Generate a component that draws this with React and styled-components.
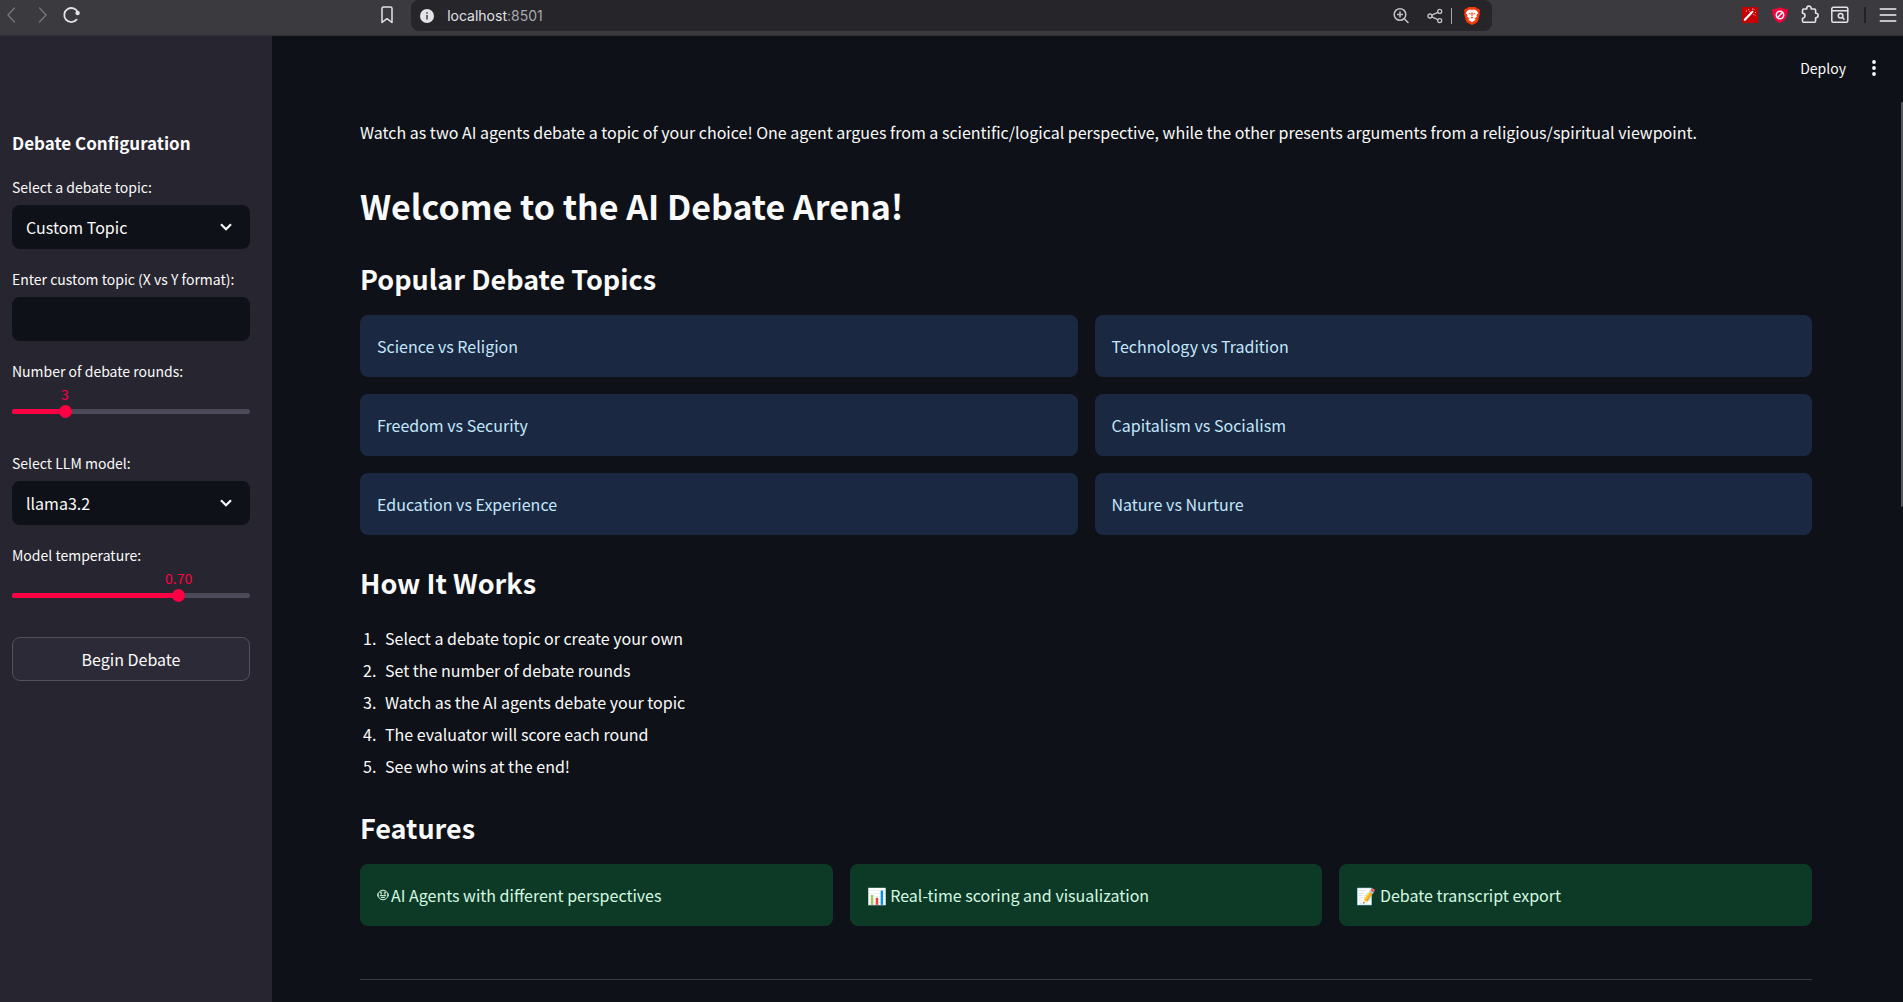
import React, { useState } from "react";
import styled, { createGlobalStyle, css } from "styled-components";

const Global = createGlobalStyle`
  *, *::before, *::after { box-sizing: border-box; }
  html, body, #root { height: 100%; }
  body {
    margin: 0;
    background: #0e1117;
    color: #fafafa;
    font: 400 16px/28px "Noto Sans CJK SC", "Noto Sans", sans-serif;
    overflow: hidden;
  }
  button, input, select { font: inherit; color: inherit; }
  h1, h2, h3, p, ol { margin: 0; }
`;

const Page = styled.div`
  height: 100%;
  display: flex;
  flex-direction: column;
`;

const Toolbar = styled.header`
  flex: none;
  display: flex;
  align-items: flex-start;
  height: 36px;
  background: #3b3a3f;
  border-bottom: 1px solid #2f2e35;
`;

const ToolGroup = styled.div`
  display: flex;
  align-items: center;
  height: 30px;
  gap: ${(p) => p.$gap}px;
  ${(p) => p.$grow && css`flex: 1;`}
  padding-left: ${(p) => p.$start || 0}px;
  padding-right: ${(p) => p.$end || 0}px;
  justify-content: ${(p) => p.$justify || "flex-start"};
`;

const IconButton = styled.button`
  flex: none;
  display: grid;
  place-items: center;
  width: 20px;
  height: 20px;
  padding: 0;
  border: 0;
  background: none;
  color: ${(p) => p.$color || "#e4e3e8"};
  svg { display: block; }
`;

const AddressBar = styled.form`
  flex: none;
  display: flex;
  align-items: center;
  gap: 10px;
  width: calc(57% - 4px);
  height: 31px;
  padding: 0 10px 0 6px;
  border-radius: 8px;
  background: #26252a;
`;

const Address = styled.div`
  flex: 1;
  font: 400 14px/30px Inter, sans-serif;
  color: #e2e1e6;
  span { color: #a9a8ae; }
`;

const Divider = styled.span`
  width: ${(p) => p.$w}px;
  height: 16px;
  background: ${(p) => p.$color};
`;

const Body = styled.div`
  flex: 1;
  min-height: 0;
  display: flex;
`;

const Sidebar = styled.aside`
  flex: none;
  display: flex;
  flex-direction: column;
  gap: 20px;
  width: 272px;
  padding: 93px 22px 0 12px;
  background: #27252f;
`;

const SidebarTitle = styled.h2`
  font-size: 17px;
  line-height: 28px;
  font-weight: 600;
`;

const Field = styled.div`
  display: flex;
  flex-direction: column;
  gap: ${(p) => p.$gap || 8}px;
  height: 72px;
`;

const Label = styled.label`
  font-size: 14px;
  line-height: 20px;
`;

const SelectWrap = styled.div`
  display: grid;
  align-items: center;
  > * { grid-area: 1 / 1; }
  svg {
    justify-self: end;
    margin-right: 18px;
    pointer-events: none;
  }
`;

const boxed = css`
  width: 100%;
  height: 44px;
  padding: 0 14px;
  border: 0;
  border-radius: 8px;
  background: #0e1117;
  outline: none;
`;

const Select = styled.select`
  ${boxed}
  appearance: none;
`;

const TextInput = styled.input`
  ${boxed}
`;

const SliderBox = styled.div`
  display: flex;
  flex-direction: column;
`;

const SliderValue = styled.output`
  align-self: flex-start;
  transform: translateX(-50%);
  font-size: 14px;
  line-height: 22px;
  color: #ff0044;
`;

const SliderLane = styled.div`
  display: grid;
  grid-template-columns: 100%;
  align-items: center;
  > * { grid-area: 1 / 1; }
`;

const Track = styled.div`
  height: 5px;
  border-radius: 3px;
  background: #4c4a58;
  overflow: hidden;
`;

const TrackFill = styled.div`
  height: 100%;
  background: #ff0044;
`;

const Range = styled.input`
  appearance: none;
  width: calc(100% + 12px);
  height: 13px;
  margin: 0 -6px;
  background: transparent;
  outline: none;
  &::-webkit-slider-runnable-track { height: 13px; }
  &::-webkit-slider-thumb {
    appearance: none;
    width: 13px;
    height: 13px;
    border-radius: 50%;
    background: #ff0044;
  }
`;

const PrimaryButton = styled.button`
  flex: none;
  height: 44px;
  border: 1px solid #53515e;
  border-radius: 8px;
  background: #2c2a36;
`;

const Main = styled.main`
  flex: 1;
  min-width: 0;
  display: flex;
  flex-direction: column;
`;

const AppHeader = styled.div`
  flex: none;
  display: flex;
  justify-content: flex-end;
  align-items: center;
  gap: 18px;
  height: 64px;
  padding-right: 19px;
`;

const DeployButton = styled.button`
  padding: 0;
  border: 0;
  background: none;
  font-size: 14px;
  line-height: 24px;
`;

const ScrollArea = styled.div`
  flex: 1;
  min-height: 0;
  display: flex;
`;

const Scroller = styled.div`
  flex: 1;
  min-width: 0;
  overflow-y: auto;
  scrollbar-width: none;
  padding: 18px 88px 18px;
`;

const ScrollRail = styled.div`
  flex: none;
  width: 3px;
  padding: 2px 0 0 1px;
`;

const ScrollThumb = styled.div`
  height: 45%;
  border-radius: 1px;
  background: #55565c;
`;

const Content = styled.div`
  display: flex;
  flex-direction: column;
`;

const Title = styled.h1`
  margin-top: 35px;
  font-size: 34px;
  line-height: 50px;
  font-weight: 600;
`;

const Heading = styled.h2`
  margin-top: 30px;
  margin-bottom: 18px;
  font-size: 27px;
  line-height: 36px;
  font-weight: 600;
`;

const CardGrid = styled.div`
  display: grid;
  grid-template-columns: repeat(${(p) => p.$cols}, 1fr);
  gap: 17px;
`;

const tones = {
  info: css`background: #1a2842; color: #c3e7fb;`,
  success: css`background: #0d3a27; color: #d5f9e0;`,
};

const Card = styled.div`
  display: flex;
  align-items: center;
  gap: 2px;
  min-height: 62px;
  padding: 0 17px;
  border-radius: 8px;
  ${(p) => tones[p.$tone]}
`;

const Steps = styled.ol`
  display: grid;
  gap: 4px;
  margin-top: 5px;
  padding-left: 20px;
  li { padding-left: 5px; }
`;

const Rule = styled.hr`
  width: 100%;
  height: 1px;
  margin: 53px 0 0;
  border: 0;
  background: #3a3b41;
`;

const Stroke = ({ w = 20, h = 20, sw = 1.4, children }) => (
  <svg width={w} height={h} viewBox={`0 0 ${w} ${h}`} fill="none" stroke="currentColor" strokeWidth={sw} strokeLinecap="round" strokeLinejoin="round" aria-hidden="true">
    {children}
  </svg>
);

const Chevron = () => (
  <svg width="12" height="8" viewBox="0 0 12 8" fill="none" stroke="currentColor" strokeWidth="2.2" aria-hidden="true">
    <path d="M1 1.2l5 5 5-5" />
  </svg>
);

const WandIcon = () => (
  <svg width="16" height="16" viewBox="0 0 16 16" aria-hidden="true">
    <rect width="16" height="16" fill="#c80000" />
    <path d="M2.8 12.8L9 6.2" stroke="#fff" strokeWidth="2.2" strokeLinecap="round" />
    <path d="M9.6 5.6l1-1" stroke="#fff" strokeWidth="1.8" strokeLinecap="round" />
    <path d="M4 4h1M6 2.6h1M7.2 4.4h1M11.5 2.4h1M13 5.5h1M11.4 7.5h1M10 2h1M12.8 8.4h.6" stroke="#ffb4b4" strokeWidth="1" />
  </svg>
);

const ShieldIcon = () => (
  <svg width="16" height="16" viewBox="0 0 16 16" aria-hidden="true">
    <path d="M8 0c2 1.4 4.5 2 7.6 2.1C15.8 8.5 14 13.5 8 16 2 13.5.2 8.5.4 2.1 3.5 2 6 1.4 8 0z" fill="#f8003c" />
    <circle cx="8" cy="8" r="3.7" fill="none" stroke="#fff" strokeWidth="1.5" />
    <path d="M5.6 10.4l4.8-4.8" stroke="#fff" strokeWidth="1.4" />
  </svg>
);

const BraveIcon = () => (
  <svg width="16" height="18" viewBox="0 0 16 18" aria-hidden="true">
    <path d="M4.6 0h6.8l1.8 1.7 1.5-.2L16 3.8l-.6 1.5.5 1.5-1.8 6.8c-.3 1-.8 1.6-1.6 2.2L8 18l-4.5-2.2c-.8-.6-1.3-1.2-1.6-2.2L.1 6.8l.5-1.5L0 3.8l1.3-2.3 1.5.2z" fill="#fb3a0c" />
    <path d="M8 3l2-.4 2.5.9 1.6 2.4-1.6 2.3.3 1.6-2.2 1.8 1 1.2L8 15.2l-3.6-2.4 1-1.2-2.2-1.8.3-1.6L1.9 5.9l1.6-2.4L6 2.6z" fill="#fff" />
    <path d="M4.2 5.8l2.6.7-.5 1.2zM11.8 5.8l-2.6.7.5 1.2zM7.3 5.5h1.4L8.5 9h-1zM6.4 10.6L8 9.7l1.6.9L8 11.4z" fill="#fb3a0c" />
  </svg>
);

const RobotFace = () => (
  <svg width="12" height="12" viewBox="0 0 12 12" fill="none" stroke="currentColor" aria-hidden="true">
    <ellipse cx="6" cy="6" rx="4.9" ry="4.8" strokeWidth="1" />
    <path d="M.4 4.4v3M11.6 4.4v3" strokeWidth=".8" />
    <path d="M2.8 3.2h2.400M6.800 3.200h2.400" strokeWidth="1" />
    <path d="M3.4 4.8h1.7M6.9 4.8h1.7" strokeWidth="1.3" />
    <path d="M2.8 6.7h6.4" strokeWidth="1.1" />
    <path d="M4 8.6h4" strokeWidth="1" />
  </svg>
);

const topics = [
  "Science vs Religion", "Technology vs Tradition",
  "Freedom vs Security", "Capitalism vs Socialism",
  "Education vs Experience", "Nature vs Nurture",
];

const steps = [
  "Select a debate topic or create your own",
  "Set the number of debate rounds",
  "Watch as the AI agents debate your topic",
  "The evaluator will score each round",
  "See who wins at the end!",
];

function SliderField({ id, label, min, max, step, initial, digits = 0 }) {
  const [value, setValue] = useState(initial);
  const at = `${((value - min) / (max - min)) * 100}%`;
  return (
    <Field $gap={2}>
      <Label htmlFor={id}>{label}</Label>
      <SliderBox>
        <SliderValue htmlFor={id} style={{ marginLeft: at }}>{value.toFixed(digits)}</SliderValue>
        <SliderLane>
          <Track><TrackFill style={{ width: at }} /></Track>
          <Range id={id} type="range" min={min} max={max} step={step} value={value}
            onChange={(e) => setValue(Number(e.target.value))} />
        </SliderLane>
      </SliderBox>
    </Field>
  );
}

function SelectField({ id, label, options }) {
  return (
    <Field>
      <Label htmlFor={id}>{label}</Label>
      <SelectWrap>
        <Select id={id}>{options.map((o) => <option key={o}>{o}</option>)}</Select>
        <Chevron />
      </SelectWrap>
    </Field>
  );
}

function BrowserBar() {
  return (
    <Toolbar>
      <ToolGroup $grow $start={2} $end={14} $justify="space-between">
        <ToolGroup $gap={10}>
          <IconButton aria-label="Back" $color="#76757b"><Stroke><path d="M12.5 3L6 10l6.5 7" /></Stroke></IconButton>
          <IconButton aria-label="Forward" $color="#76757b"><Stroke><path d="M7.5 3L14 10l-6.5 7" /></Stroke></IconButton>
          <IconButton aria-label="Reload">
            <Stroke sw={1.8}><path d="M14.6 14.6A7 7 0 1 1 15.8 7.5" /><circle cx="15.6" cy="8" r="1.3" fill="currentColor" /></Stroke>
          </IconButton>
        </ToolGroup>
        <IconButton aria-label="Bookmark"><Stroke sw={1.5}><path d="M5 3.5q0-1.5 1.5-1.5h7q1.5 0 1.5 1.5V17.5L10 13.7l-5 3.8z" /></Stroke></IconButton>
      </ToolGroup>
      <AddressBar onSubmit={(e) => e.preventDefault()}>
        <IconButton type="button" aria-label="Site information">
          <svg width="14" height="14" viewBox="0 0 14 14" aria-hidden="true">
            <circle cx="7" cy="7" r="7" fill="currentColor" />
            <path d="M7 6v4.5M7 3.3v1.5" stroke="#4a494f" strokeWidth="1.6" />
          </svg>
        </IconButton>
        <Address>localhost<span>:8501</span></Address>
        <IconButton type="button" aria-label="Zoom" $color="#c3c2c8">
          <Stroke sw={1.5}><circle cx="9" cy="8.5" r="5.8" /><path d="M13.3 12.8L17 16.5M6.6 8.5h4.8M9 6.1v4.8" /></Stroke>
        </IconButton>
        <ToolGroup $gap={6} $start={4}>
          <IconButton type="button" aria-label="Share" $color="#c3c2c8">
            <Stroke sw={1.3}><circle cx="5" cy="10" r="2" /><circle cx="14.7" cy="5.4" r="2" /><circle cx="14.7" cy="14.6" r="2" /><path d="M6.9 9.1l5.9-2.8M6.9 10.9l5.9 2.8" /></Stroke>
          </IconButton>
          <Divider $w={1} $color="#a9a8ae" />
        </ToolGroup>
        <IconButton type="button" aria-label="Shields"><BraveIcon /></IconButton>
      </AddressBar>
      <ToolGroup $grow $gap={10} $start={11} $end={5} $justify="flex-end">
        <IconButton aria-label="Wand extension"><WandIcon /></IconButton>
        <IconButton aria-label="Blocker extension"><ShieldIcon /></IconButton>
        <IconButton aria-label="Extensions">
          <Stroke sw={1.6}><path d="M2.5 5.2Q2.5 4 3.7 4H6.8V3.3a2.2 2.2 0 0 1 4.4 0V4h3.2Q15.6 4 15.6 5.2V8.3h.3a2.2 2.2 0 0 1 0 4.4h-.3V16q0 1.2-1.2 1.2H3.7q-1.2 0-1.2-1.2V13.2a2.5 2.5 0 0 0 0-5z" /></Stroke>
        </IconButton>
        <IconButton aria-label="Search tabs">
          <Stroke sw={1.5}><rect x="1.8" y="2.3" width="16" height="15" rx="1.5" /><path d="M2 5.7h15.6" /><circle cx="10.6" cy="10.7" r="2.3" /><path d="M12.3 12.4l1.7 1.7" /></Stroke>
        </IconButton>
        <ToolGroup $gap={12} $start={4}>
          <Divider $w={2} $color="#222126" />
          <IconButton aria-label="Menu" $color="#c3c2c8"><Stroke sw={2}><path d="M2.5 4h15M2.5 10h15M2.5 16h15" /></Stroke></IconButton>
        </ToolGroup>
      </ToolGroup>
    </Toolbar>
  );
}

export default function App() {
  return (
    <Page>
      <Global />
      <BrowserBar />
      <Body>
        <Sidebar>
          <SidebarTitle>Debate Configuration</SidebarTitle>
          <SelectField id="topic" label="Select a debate topic:" options={["Custom Topic", ...topics]} />
          <Field>
            <Label htmlFor="custom">Enter custom topic (X vs Y format):</Label>
            <TextInput id="custom" type="text" />
          </Field>
          <SliderField id="rounds" label="Number of debate rounds:" min={1} max={10} step={1} initial={3} />
          <SelectField id="model" label="Select LLM model:" options={["llama3.2"]} />
          <SliderField id="temp" label="Model temperature:" min={0} max={1} step={0.05} initial={0.7} digits={2} />
          <PrimaryButton type="button">Begin Debate</PrimaryButton>
        </Sidebar>
        <Main>
          <AppHeader>
            <DeployButton type="button">Deploy</DeployButton>
            <IconButton aria-label="More options" $color="#fafafa">
              <svg width="4" height="16" viewBox="0 0 4 16" fill="currentColor" aria-hidden="true">
                <circle cx="2" cy="2" r="1.9" /><circle cx="2" cy="8" r="1.9" /><circle cx="2" cy="14" r="1.9" />
              </svg>
            </IconButton>
          </AppHeader>
          <ScrollArea>
            <Scroller>
              <Content>
                <p>
                  Watch as two AI agents debate a topic of your choice! One agent argues from a scientific/logical
                  perspective, while the other presents arguments from a religious/spiritual viewpoint.
                </p>
                <Title>Welcome to the AI Debate Arena!</Title>
                <Heading>Popular Debate Topics</Heading>
                <CardGrid $cols={2}>
                  {topics.map((t) => <Card key={t} $tone="info">{t}</Card>)}
                </CardGrid>
                <Heading>How It Works</Heading>
                <Steps>{steps.map((s) => <li key={s}>{s}</li>)}</Steps>
                <Heading>Features</Heading>
                <CardGrid $cols={3}>
                  <Card $tone="success"><RobotFace /><span>AI Agents with different perspectives</span></Card>
                  <Card $tone="success">📊 Real-time scoring and visualization</Card>
                  <Card $tone="success">📝 Debate transcript export</Card>
                </CardGrid>
                <Rule />
              </Content>
            </Scroller>
            <ScrollRail><ScrollThumb /></ScrollRail>
          </ScrollArea>
        </Main>
      </Body>
    </Page>
  );
}
